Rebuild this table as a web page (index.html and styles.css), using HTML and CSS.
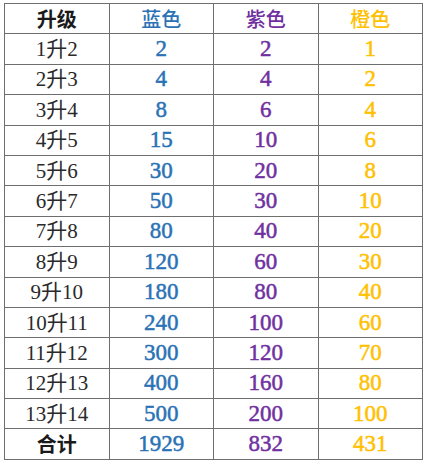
FILE: index.html
```html
<!DOCTYPE html>
<html lang="zh">
<head>
<meta charset="utf-8">
<link rel="stylesheet" href="styles.css">
</head>
<body>
<table class="tbl">
  <thead>
    <tr><th class="lvl">升级</th><th class="blue">蓝色</th><th class="purple">紫色</th><th class="orange">橙色</th></tr>
  </thead>
  <tbody>
    <tr><td class="lvl">1升2</td><td class="blue">2</td><td class="purple">2</td><td class="orange">1</td></tr>
    <tr><td class="lvl">2升3</td><td class="blue">4</td><td class="purple">4</td><td class="orange">2</td></tr>
    <tr><td class="lvl">3升4</td><td class="blue">8</td><td class="purple">6</td><td class="orange">4</td></tr>
    <tr><td class="lvl">4升5</td><td class="blue">15</td><td class="purple">10</td><td class="orange">6</td></tr>
    <tr><td class="lvl">5升6</td><td class="blue">30</td><td class="purple">20</td><td class="orange">8</td></tr>
    <tr><td class="lvl">6升7</td><td class="blue">50</td><td class="purple">30</td><td class="orange">10</td></tr>
    <tr><td class="lvl">7升8</td><td class="blue">80</td><td class="purple">40</td><td class="orange">20</td></tr>
    <tr><td class="lvl">8升9</td><td class="blue">120</td><td class="purple">60</td><td class="orange">30</td></tr>
    <tr><td class="lvl">9升10</td><td class="blue">180</td><td class="purple">80</td><td class="orange">40</td></tr>
    <tr><td class="lvl">10升11</td><td class="blue">240</td><td class="purple">100</td><td class="orange">60</td></tr>
    <tr><td class="lvl">11升12</td><td class="blue">300</td><td class="purple">120</td><td class="orange">70</td></tr>
    <tr><td class="lvl">12升13</td><td class="blue">400</td><td class="purple">160</td><td class="orange">80</td></tr>
    <tr><td class="lvl">13升14</td><td class="blue">500</td><td class="purple">200</td><td class="orange">100</td></tr>
    <tr class="total"><td class="lvl sum">合计</td><td class="blue">1929</td><td class="purple">832</td><td class="orange">431</td></tr>
  </tbody>
</table>
</body>
</html>
```

FILE: styles.css
```css
html, body {
  margin: 0;
  padding: 0;
  background: #ffffff;
}
body {
  padding: 3px 0 0 4px;
  font-family: "Liberation Serif", "Noto Sans CJK SC", serif;
}
.tbl {
  border-collapse: collapse;
  width: 419px;
  table-layout: fixed;
}
.tbl th, .tbl td {
  border: 1px solid #6e6e6e;
  height: 29.4px;
  padding: 0;
  text-align: center;
  vertical-align: middle;
  font-size: 21px;
  line-height: 24px;
  font-weight: normal;
}
.tbl th {
  font-family: "Noto Sans CJK SC", sans-serif;
  font-weight: 500;
  font-size: 20px;
}
.tbl .lvl {
  color: #2a2a2a;
}
.tbl th.lvl, .tbl .sum {
  font-family: "Noto Sans CJK SC", sans-serif;
  font-weight: 700;
  font-size: 20px;
  color: #1a1a1a;
}
.blue { color: #2a72b5; }
.purple { color: #7030a0; }
.orange { color: #ffc000; }
.tbl td.blue, .tbl td.purple, .tbl td.orange {
  font-family: "Liberation Serif", serif;
  font-weight: 400;
  font-size: 23px;
  -webkit-text-stroke: 0.5px currentColor;
}
.tbl th.blue, .tbl th.purple, .tbl th.orange {
  font-weight: 500;
}
```
